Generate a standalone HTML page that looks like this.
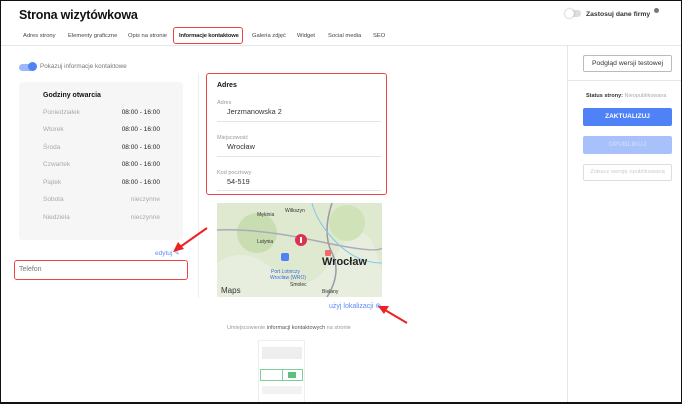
<!DOCTYPE html><html><head><style>
*{box-sizing:border-box;margin:0;padding:0}
body{width:682px;height:404px;overflow:hidden;background:#fff;font-family:"Liberation Sans",sans-serif;position:relative;color:#222}
.a{position:absolute}
.frame{position:absolute;left:0;top:0;width:682px;height:404px;border:1px solid #111;border-bottom:2px solid #111;pointer-events:none}
.tab{position:absolute;top:33px;font-size:5.8px;color:#444;white-space:nowrap}
.row{position:absolute;left:43px;width:117px;font-size:6.5px}
.row span{float:right;color:#222}
.gray{color:#aaa}
.lbl{position:absolute;left:217px;font-size:5.5px;color:#999}
.val{position:absolute;left:227px;font-size:7.3px;color:#333}
.hl{position:absolute;left:217px;width:164px;height:1px;background:#e4e4e4}
.btn{position:absolute;left:583px;width:89px;border-radius:2px;font-size:6.5px;text-align:center;white-space:nowrap;overflow:hidden}
</style></head><body>
<div class="a" style="left:19px;top:8px;font-size:12.5px;font-weight:bold;color:#111;letter-spacing:-0.2px">Strona wizytówkowa</div>
<div class="a" style="left:566px;top:10px;width:15px;height:7px;border-radius:4px;background:#ddd"></div>
<div class="a" style="left:565px;top:9px;width:9px;height:9px;border-radius:50%;background:#fff;box-shadow:0 0 2px #999"></div>
<div class="a" style="left:586px;top:11px;font-size:6.8px;font-weight:bold;color:#333">Zastosuj dane firmy</div>
<div class="a" style="left:654px;top:8px;width:5px;height:5px;border-radius:50%;background:#777"></div>
<div class="tab" style="left:23px">Adres strony</div>
<div class="tab" style="left:68px">Elementy graficzne</div>
<div class="tab" style="left:128px">Opis na stronie</div>
<div class="a" style="left:173px;top:27px;width:70px;height:17px;border:1.5px solid #e44;border-radius:3px"></div>
<div class="tab" style="left:179px;font-weight:bold;color:#222;letter-spacing:-0.15px">Informacje kontaktowe</div>
<div class="tab" style="left:252px">Galeria zdjęć</div>
<div class="tab" style="left:297px">Widget</div>
<div class="tab" style="left:328px">Social media</div>
<div class="tab" style="left:373px">SEO</div>
<div class="a" style="left:1px;top:45px;width:680px;height:1px;background:#e6e6e6"></div>
<div class="a" style="left:567px;top:45px;width:1px;height:357px;background:#e6e6e6"></div>
<div class="btn" style="top:55px;height:17px;border:1px solid #bbb;line-height:15px;color:#333;font-size:6.8px">Podgląd wersji testowej</div>
<div class="a" style="left:568px;top:80px;width:113px;height:1px;background:#e6e6e6"></div>
<div class="a" style="left:586px;top:93px;font-size:5.5px;color:#aaa"><b style="color:#333">Status strony:</b> Nieopublikowana</div>
<div class="btn" style="top:108px;height:18px;background:#4f82f7;color:#fff;font-weight:bold;line-height:18px">ZAKTUALIZUJ</div>
<div class="btn" style="top:136px;height:18px;background:#a8c1fb;color:#c9d8fc;font-weight:bold;line-height:18px">OPUBLIKUJ</div>
<div class="btn" style="top:164px;height:17px;border:1px solid #ddd;color:#ccc;line-height:15px;font-size:5.8px">Zobacz wersję opublikowaną</div>

<div class="a" style="left:19px;top:64px;width:17px;height:7px;border-radius:4px;background:#9bb8fa"></div>
<div class="a" style="left:28px;top:62px;width:9px;height:9px;border-radius:50%;background:#4f82f7"></div>
<div class="a" style="left:40px;top:63px;font-size:6.3px;color:#777">Pokazuj informacje kontaktowe</div>
<div class="a" style="left:19px;top:82px;width:164px;height:158px;background:#f6f6f6;border-radius:3px"></div>
<div class="a" style="left:43px;top:92px;font-size:7px;font-weight:bold;color:#111">Godziny otwarcia</div>
<div class="row gray" style="top:109px">Poniedziałek<span>08:00 - 16:00</span></div>
<div class="row gray" style="top:126px">Wtorek<span>08:00 - 16:00</span></div>
<div class="row gray" style="top:144px">Środa<span>08:00 - 16:00</span></div>
<div class="row gray" style="top:161px">Czwartek<span>08:00 - 16:00</span></div>
<div class="row gray" style="top:179px">Piątek<span>08:00 - 16:00</span></div>
<div class="row gray" style="top:196px">Sobota<span style="color:#aaa">nieczynne</span></div>
<div class="row gray" style="top:214px">Niedziela<span style="color:#aaa">nieczynne</span></div>
<div class="a" style="left:155px;top:249px;font-size:6.5px;color:#5b8cf7">edytuj ✎</div>
<div class="a" style="left:14px;top:260px;width:174px;height:20px;border:1.5px solid #e44;border-radius:3px;font-size:7px;color:#777;padding:5px 4px">Telefon</div>
<div class="a" style="left:198px;top:73px;width:1px;height:225px;background:#eee"></div>

<div class="a" style="left:206px;top:73px;width:181px;height:122px;border:1.5px solid #e44;border-radius:3px"></div>
<div class="a" style="left:217px;top:82px;font-size:7px;font-weight:bold;color:#111">Adres</div>
<div class="lbl" style="top:100px">Adres</div><div class="val" style="top:107px">Jerzmanowska 2</div>
<div class="hl" style="top:121px"></div>
<div class="lbl" style="top:135px">Miejscowość</div><div class="val" style="top:142px">Wrocław</div>
<div class="hl" style="top:156px"></div>
<div class="lbl" style="top:170px">Kod pocztowy</div><div class="val" style="top:177px">54-519</div>
<div class="hl" style="top:190px"></div>

<svg class="a" style="left:217px;top:203px" width="165" height="94" viewBox="0 0 165 94">
<rect width="165" height="94" fill="#dfe9cf"/>
<path d="M0 60 Q30 40 60 70 T120 50 165 70 V94 H0Z" fill="#e8eedd"/>
<circle cx="40" cy="30" r="20" fill="#c8ddb0"/><circle cx="130" cy="20" r="18" fill="#cfe2b8"/>
<path d="M0 27 Q40 25 100 38 T165 45" stroke="#aab" stroke-width="1.5" fill="none"/>
<path d="M115 0 Q105 30 115 50 T110 94" stroke="#99a" stroke-width="1.5" fill="none"/>
<path d="M95 0 Q100 20 120 40 T165 60" stroke="#7fc7e8" stroke-width="1" fill="none"/>
<circle cx="84" cy="37" r="6" fill="#d9334f"/><rect x="83" y="34" width="2" height="6" fill="#fff"/>
<rect x="64" y="50" width="8" height="8" rx="2" fill="#4f82f7"/>
<rect x="108" y="47" width="6" height="6" rx="1" fill="#f26b6b"/>
<text x="105" y="62" font-size="11" font-weight="bold" fill="#222" font-family="Liberation Sans">Wrocław</text>
<text x="54" y="70" font-size="5" fill="#3d6be0" font-family="Liberation Sans">Port Lotniczy</text>
<text x="53" y="76" font-size="5" fill="#3d6be0" font-family="Liberation Sans">Wrocław (WRO)</text>
<text x="40" y="13" font-size="5" fill="#333" font-family="Liberation Sans">Mękinia</text>
<text x="68" y="9" font-size="5" fill="#333" font-family="Liberation Sans">Wilkszyn</text>
<text x="40" y="40" font-size="5" fill="#333" font-family="Liberation Sans">Lutynia</text>
<text x="73" y="83" font-size="5" fill="#333" font-family="Liberation Sans">Smolec</text>
<text x="105" y="90" font-size="5" fill="#333" font-family="Liberation Sans">Bielany</text>
<text x="4" y="90" font-size="8" fill="#333" font-family="Liberation Sans">Maps</text>
</svg>
<div class="a" style="left:329px;top:302px;font-size:7px;color:#5b8cf7">użyj lokalizacji ⊕</div>
<div class="a" style="left:227px;top:325px;font-size:5.5px;color:#999">Umiejscowienie <b style="color:#555;font-weight:normal">informacji kontaktowych</b> na stronie</div>
<div class="a" style="left:258px;top:340px;width:47px;height:64px;border:1px solid #eee;background:#fff"></div>
<div class="a" style="left:262px;top:347px;width:40px;height:12px;background:#eee"></div>
<div class="a" style="left:260px;top:369px;width:43px;height:12px;border:1px solid #7fcf9b"></div>
<div class="a" style="left:282px;top:369px;width:1px;height:12px;background:#7fcf9b"></div>
<div class="a" style="left:288px;top:372px;width:8px;height:6px;background:#5fbf7f"></div>
<div class="a" style="left:262px;top:386px;width:40px;height:8px;background:#f2f2f2"></div>

<svg class="a" style="left:0;top:0" width="682" height="404">
<line x1="207" y1="228" x2="180" y2="247" stroke="#e22" stroke-width="2"/>
<polygon points="173,252 178,242 184,249" fill="#e22"/>
<line x1="407" y1="323" x2="385" y2="310" stroke="#e22" stroke-width="2"/>
<polygon points="378,306 389,306 384,314" fill="#e22"/>
</svg>
<div class="frame"></div>
</body></html>
